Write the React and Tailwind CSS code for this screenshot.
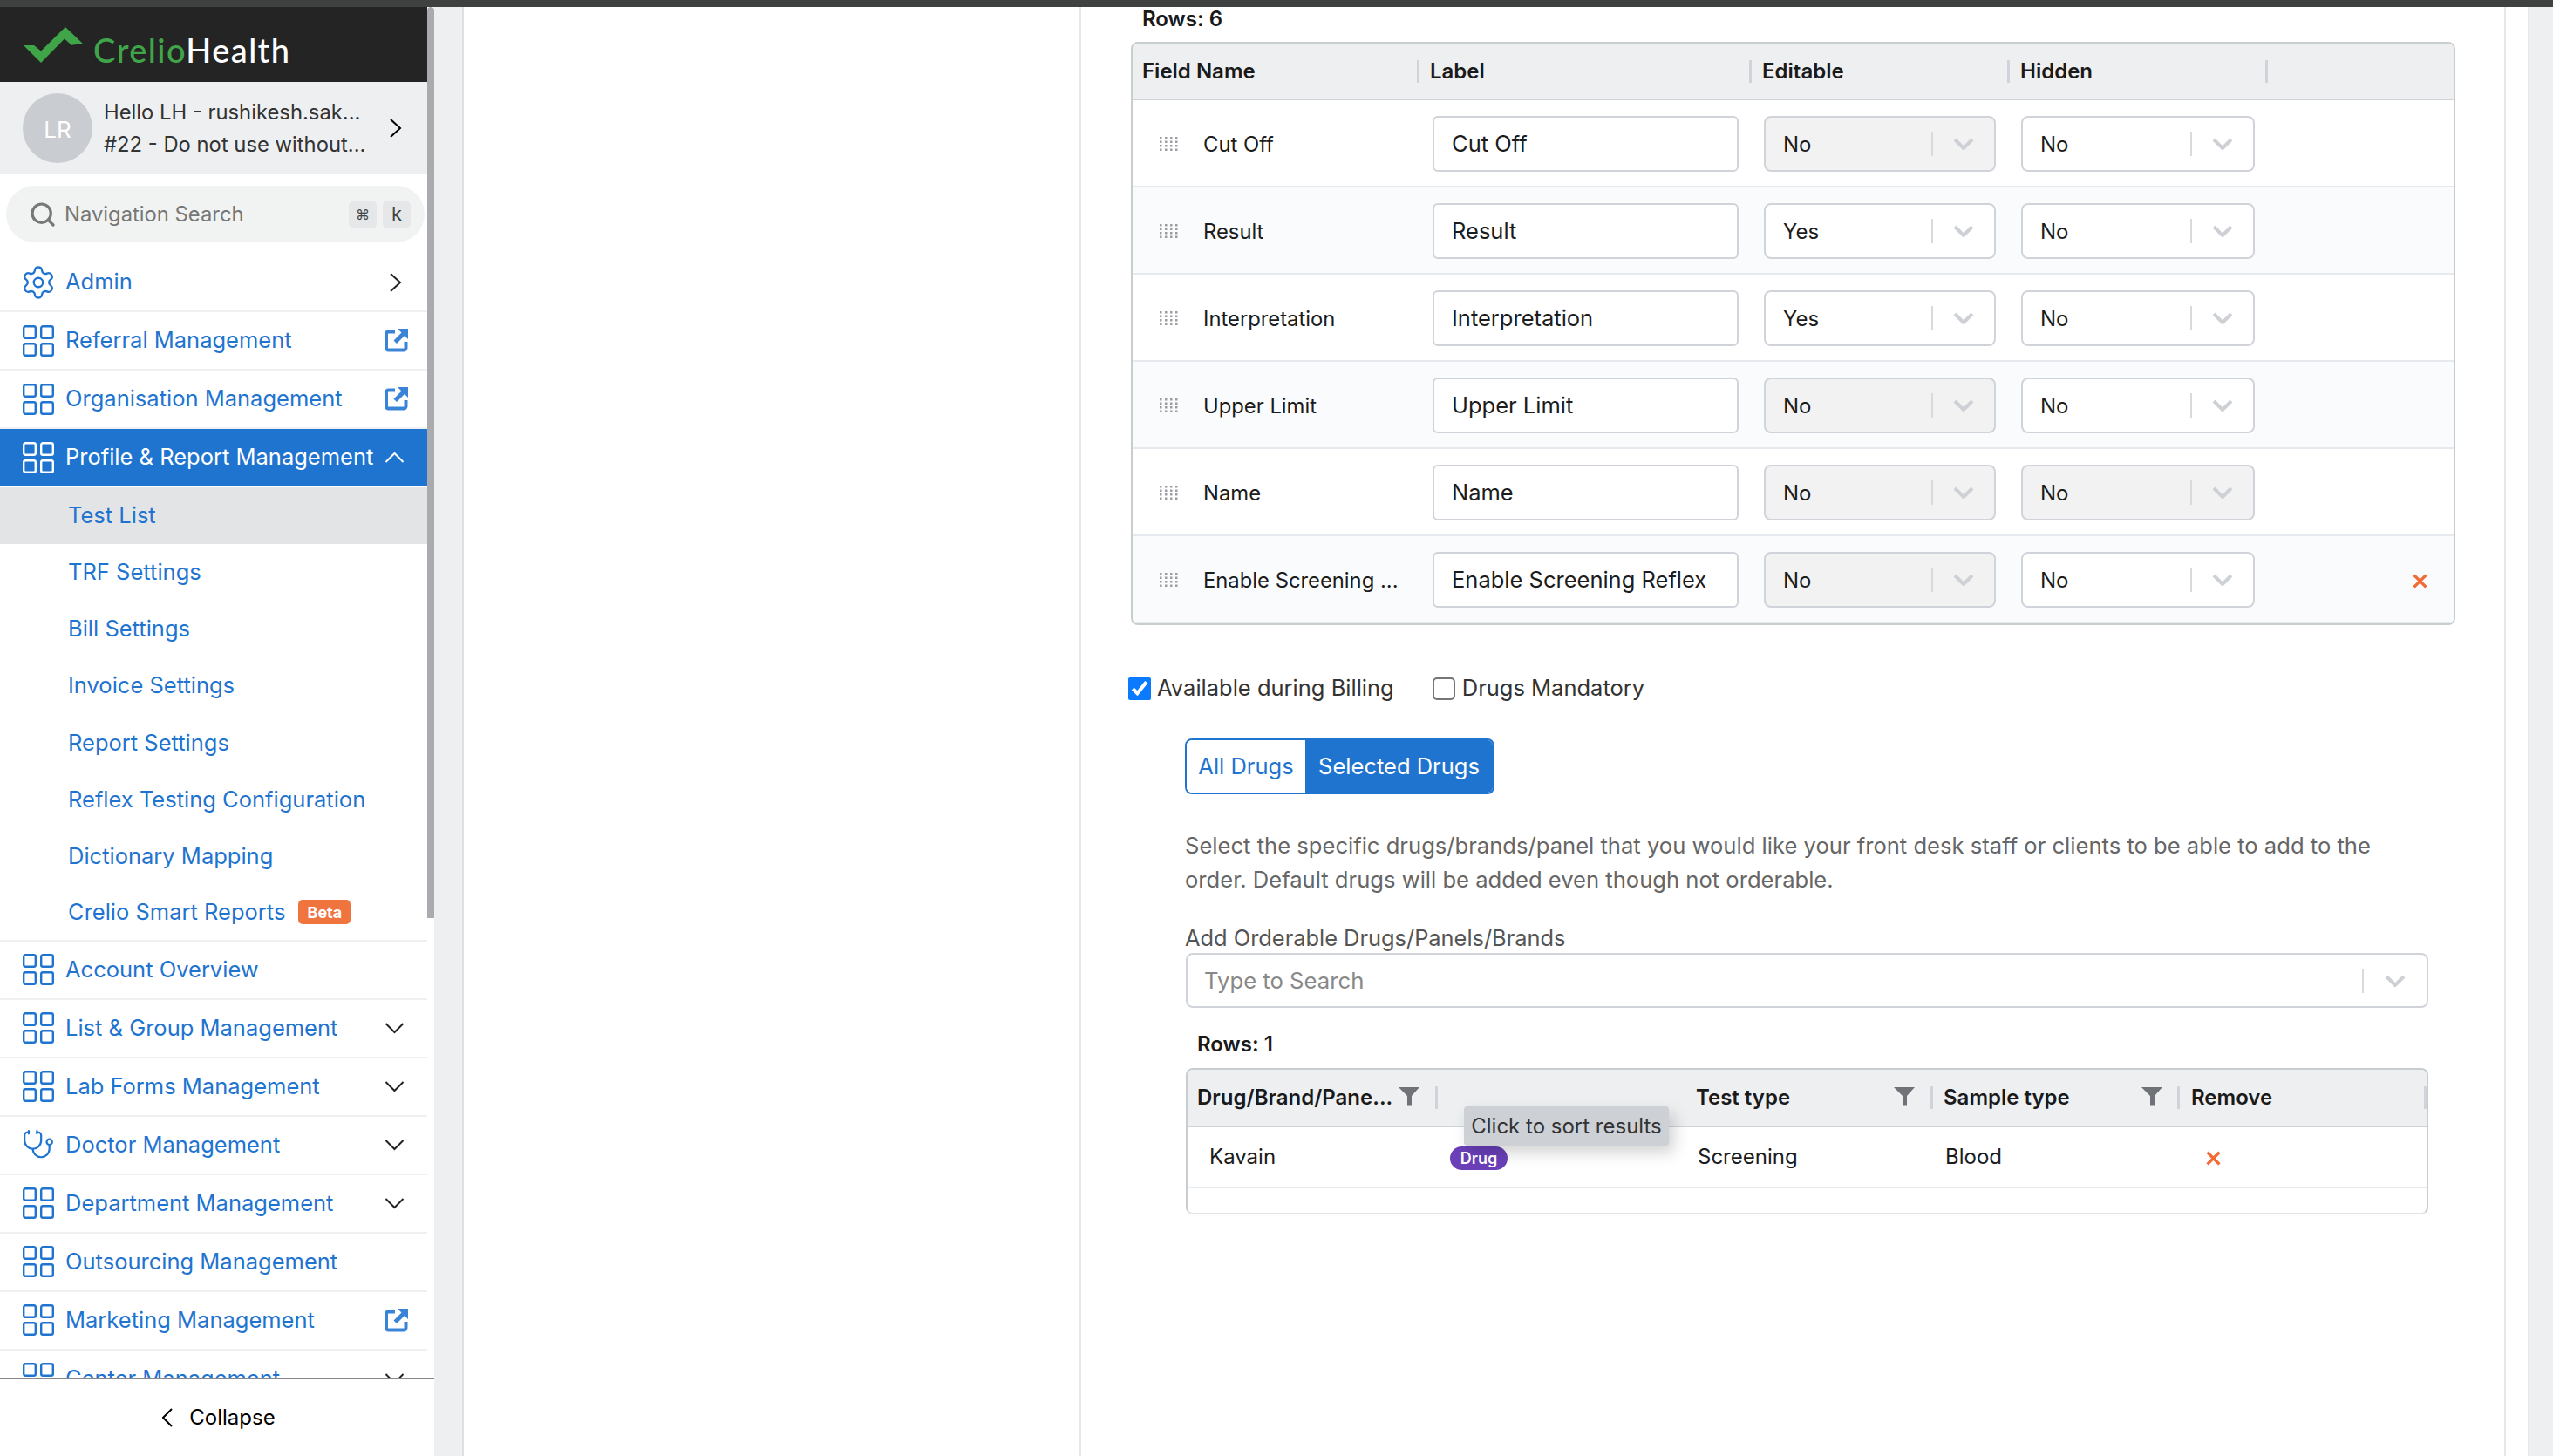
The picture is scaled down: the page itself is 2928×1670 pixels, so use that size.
import { Settings, Stethoscope, Search } from "lucide-react";

const fields = [
  { name: "Cut Off", label: "Cut Off", editable: "No", editLocked: true, hidden: "No" },
  { name: "Result", label: "Result", editable: "Yes", hidden: "No" },
  { name: "Interpretation", label: "Interpretation", editable: "Yes", hidden: "No" },
  { name: "Upper Limit", label: "Upper Limit", editable: "No", editLocked: true, hidden: "No" },
  { name: "Name", label: "Name", editable: "No", editLocked: true, hidden: "No", hiddenLocked: true },
  { name: "Enable Screening ...", label: "Enable Screening Reflex", editable: "No", editLocked: true, hidden: "No", removable: true },
];

const subMenu = ["TRF Settings", "Bill Settings", "Invoice Settings", "Report Settings", "Reflex Testing Configuration", "Dictionary Mapping"];

function GridIcon() {
  return (
    <svg width="36" height="36" viewBox="0 0 36 36" fill="none" stroke="currentColor" strokeWidth="2.400" className="shrink-0">
      <rect x="1.200" y="1.200" width="13.600" height="13.600" rx="2" />
      <rect x="21.200" y="1.200" width="13.600" height="13.600" rx="2" />
      <rect x="1.200" y="21.200" width="13.600" height="13.600" rx="2" />
      <rect x="21.200" y="21.200" width="13.600" height="13.600" rx="2" />
    </svg>
  );
}

function ExternalIcon() {
  return (
    <svg width="27" height="27" viewBox="0 0 27 27" fill="none" className="shrink-0 text-[#3a84d8]">
      <path d="M12 3.500H4.500a2.500 2.500 0 0 0-2.500 2.500V22a2.500 2.500 0 0 0 2.500 2.500H22a2.500 2.500 0 0 0 2.500-2.500v-7" stroke="currentColor" strokeWidth="4" />
      <path d="M15 0H27V12L23 8L14 17L10.500 13.500L19.500 4.500Z" fill="currentColor" />
    </svg>
  );
}

// thin chevrons, all share one 27px box so they line up with the external icon
function ChevronThin({ dir }) {
  const paths = {
    right: "M7 4L18 14L7 24",
    down: "M1.500 9L11.500 19L21.500 9",
    up: "M1.500 19L11.500 9L21.500 19",
  };
  return (
    <svg width="27" height="28" viewBox="0 0 27 28" fill="none" stroke="currentColor" strokeWidth="2" className="shrink-0">
      <path d={paths[dir]} />
    </svg>
  );
}

function Grip() {
  const dots = [];
  for (let r = 0; r < 4; r++) {
    for (let c = 0; c < 4; c++) {
      dots.push(<rect key={r + "-" + c} x={c * 6} y={r * 4.5} width="2.500" height="2.500" />);
    }
  }
  return (
    <svg width="21" height="16" viewBox="0 0 21 16" fill="#9a9ea3" className="shrink-0">
      {dots}
    </svg>
  );
}

function Funnel() {
  return (
    <svg width="24" height="21" viewBox="0 0 24 21" fill="#6f7277" className="shrink-0 -mt-[3px]">
      <path d="M0 0H24L15 10V20.500L10 20.500V10Z" />
    </svg>
  );
}

function Cross() {
  return (
    <svg width="17" height="17" viewBox="0 0 16 16" fill="none" stroke="#f26b35" strokeWidth="3.200" className="shrink-0 mt-[2px]">
      <path d="M1.500 1.500L14.500 14.500M14.500 1.500L1.500 14.500" />
    </svg>
  );
}

function Caret() {
  return (
    <svg width="24" height="14" viewBox="0 0 24 14" fill="none" stroke="#cdd0d4" strokeWidth="4" className="shrink-0">
      <path d="M2 2L12 12L22 2" />
    </svg>
  );
}

function Select({ value, locked, className }) {
  return (
    <div className={"h-[64px] flex items-center border-2 border-[#d0d4da] rounded-[8px] pl-[20px] text-[24px] text-[#1c1c1c] " + (locked ? "bg-[#f2f2f2] " : "bg-white ") + className}>
      <span className="flex-1 pt-[1px]">{value}</span>
      <span className="w-[2px] h-[28px] bg-[#d8dadd]" />
      <span className="w-[70px] flex justify-center">
        <Caret />
      </span>
    </div>
  );
}

function Sep() {
  return <span className="w-[3px] h-[26px] bg-[#d0d4da] shrink-0" />;
}

function NavRow({ label, icon, right }) {
  return (
    <div className="h-[67px] shrink-0 flex items-center pl-[26px] pr-[22px] gap-[13px] border-b-2 border-[#f0f0f1] text-[#1f74d0] text-[25.500px]">
      {icon || <GridIcon />}
      <span className="flex-1 whitespace-nowrap">{label}</span>
      {right}
    </div>
  );
}

function Sidebar() {
  return (
    <aside className="w-[498px] shrink-0 flex flex-col bg-white relative">
      <div className="absolute right-0 top-0 w-[8px] h-[1045px] bg-[#a9abae] rounded-t-[4px] z-10" />
      <div className="h-[86px] shrink-0 w-[490px] bg-[#242424] flex items-center pl-[27px] gap-[12px]">
        <svg width="68" height="41" viewBox="0 0 68 41" fill="#3fa548" className="shrink-0">
          <path d="M0 21H12L20 27.500L48 0L68 19L55 20.700L47 13.500L20 41Z" />
        </svg>
        <span className="font-['Lato',sans-serif] text-[38px] tracking-[1.400px] font-medium leading-none mt-[12px]">
          <span className="text-[#3fa548]">Crelio</span>
          <span className="text-white">Health</span>
        </span>
      </div>
      <div className="h-[106px] shrink-0 w-[490px] bg-[#eeeff1] flex items-center pl-[26px] pr-[22px]">
        <div className="w-[80px] h-[80px] rounded-full bg-[#c9ccd0] text-white text-[26px] flex items-center justify-center shrink-0 pt-[2px]">LR</div>
        <div className="ml-[13px] flex-1 text-[23.800px] leading-[37px] text-[#333] whitespace-nowrap">
          <div>Hello LH - rushikesh.sak...</div>
          <div>#22 - Do not use without...</div>
        </div>
        <ChevronThin dir="right" />
      </div>
      <div className="flex-1 min-h-0 w-[490px] overflow-hidden">
        <div className="pl-[7px] pr-[3px] pt-[13px] pb-[13px]">
          <div className="h-[65px] rounded-full bg-[#f1f3f3] flex items-center pl-[26px] pr-[16px] text-[23.800px] text-[#777]">
            <Search size={32} strokeWidth={2.400} className="shrink-0 text-[#777]" />
            <span className="ml-[9px] flex-1">Navigation Search</span>
            <span className="w-[32px] h-[32px] rounded-[6px] bg-[#e6e7e8] flex items-center justify-center text-[16px] text-[#444]">⌘</span>
            <span className="w-[32px] h-[32px] rounded-[6px] bg-[#e6e7e8] flex items-center justify-center text-[22px] text-[#444] ml-[7px]">k</span>
          </div>
        </div>
        <NavRow
          label="Admin"
          icon={
            <span className="w-[36px] h-[36px] flex items-center justify-center shrink-0">
              <Settings size={42} strokeWidth={1.350} className="shrink-0" />
            </span>
          }
          right={<span className="text-[#222]"><ChevronThin dir="right" /></span>}
        />
        <NavRow label="Referral Management" right={<ExternalIcon />} />
        <NavRow label="Organisation Management" right={<ExternalIcon />} />
        <div className="h-[67px] flex items-center pl-[26px] pr-[22px] gap-[13px] bg-[#1f74d0] border-b-2 border-white text-white text-[25.500px]">
          <GridIcon />
          <span className="flex-1 whitespace-nowrap">Profile &amp; Report Management</span>
          <ChevronThin dir="up" />
        </div>
        <div className="h-[64.600px] flex items-center pl-[78px] bg-[#e3e4e6] text-[#1f74d0] text-[25.500px]">Test List</div>
        {subMenu.map((s) => (
          <div key={s} className="h-[65.200px] flex items-center pl-[78px] text-[#1f74d0] text-[25.500px]">
            {s}
          </div>
        ))}
        <div className="h-[65.200px] flex items-center pl-[78px] text-[#1f74d0] text-[25.500px] border-b-2 border-[#f0f0f1]">
          Crelio Smart Reports
          <span className="ml-[15px] h-[28px] w-[60px] rounded-[5px] bg-[#f0743e] text-white text-[18px] font-bold flex items-center justify-center">Beta</span>
        </div>
        <NavRow label="Account Overview" />
        <NavRow label="List &amp; Group Management" right={<span className="text-[#222]"><ChevronThin dir="down" /></span>} />
        <NavRow label="Lab Forms Management" right={<span className="text-[#222]"><ChevronThin dir="down" /></span>} />
        <NavRow
          label="Doctor Management"
          icon={
            <span className="w-[36px] h-[36px] flex items-center justify-center shrink-0">
              <Stethoscope size={38} strokeWidth={1.400} className="shrink-0" />
            </span>
          }
          right={<span className="text-[#222]"><ChevronThin dir="down" /></span>}
        />
        <NavRow label="Department Management" right={<span className="text-[#222]"><ChevronThin dir="down" /></span>} />
        <NavRow label="Outsourcing Management" />
        <NavRow label="Marketing Management" right={<ExternalIcon />} />
        <NavRow label="Center Management" right={<span className="text-[#222]"><ChevronThin dir="down" /></span>} />
      </div>
      <div className="h-[90px] shrink-0 border-t-2 border-[#85878a] bg-white flex items-center justify-center pl-[4px] gap-[19px] text-[24px] text-black">
        <svg width="12" height="22" viewBox="0 0 12 22" fill="none" stroke="currentColor" strokeWidth="2" className="shrink-0">
          <path d="M11 1L1 11L11 21" />
        </svg>
        <span>Collapse</span>
      </div>
    </aside>
  );
}

function FieldTable() {
  return (
    <div className="w-[1519px] border-2 border-[#c8cdd0] rounded-[8px] overflow-hidden">
      <div className="h-[65px] bg-[#eeeff1] flex items-center border-b-2 border-[#d0d4da] text-[24px] font-semibold text-[#1a1a1a]">
        <div className="w-[326px] pl-[11px] pt-[1px]">Field Name</div>
        <Sep />
        <div className="w-[378px] pl-[12px] pt-[1px]">Label</div>
        <Sep />
        <div className="w-[293px] pl-[12px] pt-[1px]">Editable</div>
        <Sep />
        <div className="w-[293px] pl-[12px] pt-[1px]">Hidden</div>
        <Sep />
      </div>
      {fields.map((f, i) => (
        <div key={f.name} className={"h-[100px] pt-[2px] flex items-center border-b-2 border-[#e6e9ee] " + (i % 2 === 1 ? "bg-[#fafbfd]" : "bg-white")}>
          <div className="ml-[31px]">
            <Grip />
          </div>
          <div className="ml-[29px] w-[263px] text-[23.800px] text-[#1c1c1c] whitespace-nowrap pt-[1px]">{f.name}</div>
          <div className="w-[351px] h-[64px] bg-white border-2 border-[#d0d4da] rounded-[6px] flex items-center pl-[20px] text-[25.500px] text-[#1c1c1c] whitespace-nowrap">{f.label}</div>
          <Select value={f.editable} locked={f.editLocked} className="ml-[29px] w-[266px]" />
          <Select value={f.hidden} locked={f.hiddenLocked} className="ml-[29px] w-[268px]" />
          {f.removable && (
            <div className="ml-auto mr-[30px]">
              <Cross />
            </div>
          )}
        </div>
      ))}
    </div>
  );
}

function DrugTable() {
  return (
    <div className="relative ml-[1px] w-[1425px] h-[168px] border-2 border-[#c8cdd0] border-b-[#e2e5e8] rounded-[8px]">
      <div className="h-[66px] bg-[#eeeff1] flex items-center border-b-2 border-[#d0d4da] text-[24px] font-semibold text-[#1a1a1a] rounded-t-[6px]">
        <div className="w-[284px] pl-[11px] pr-[18px] flex items-center justify-between">
          <span className="whitespace-nowrap">Drug/Brand/Pane...</span>
          <Funnel />
        </div>
        <Sep />
        <div className="w-[565px] pl-[296px] pr-[18px] flex items-center justify-between">
          <span>Test type</span>
          <Funnel />
        </div>
        <Sep />
        <div className="w-[280px] pl-[12px] pr-[17px] flex items-center justify-between">
          <span>Sample type</span>
          <Funnel />
        </div>
        <Sep />
        <div className="flex-1 pl-[13px]">Remove</div>
        <Sep />
      </div>
      <div className="h-[70px] flex items-center border-b-2 border-[#e6e9ee] text-[24px] text-[#1c1c1c]">
        <div className="w-[301px] pl-[25px]">Kavain</div>
        <div className="w-[284px]">
          <span className="inline-flex items-center justify-center w-[66px] h-[27px] rounded-full bg-[#6a3fb8] text-white text-[18px] font-semibold mt-[4px]">Drug</span>
        </div>
        <div className="w-[284px]">Screening</div>
        <div className="w-[299px]">Blood</div>
        <Cross />
      </div>
      <div className="absolute left-[317px] top-[42px] w-[235px] h-[45px] rounded-[4px] bg-[#cdd0d5] text-[24px] text-[#333] flex items-center justify-center whitespace-nowrap shadow-[6px_8px_18px_rgba(0,0,0,0.18)]">
        Click to sort results
      </div>
    </div>
  );
}

export default function App() {
  return (
    <div className="w-[2928px] h-[1670px] overflow-hidden flex flex-col bg-white font-['Inter',sans-serif]">
      <div className="h-[8px] shrink-0 bg-[#3f4040]" />
      <div className="flex-1 min-h-0 flex">
        <Sidebar />
        <div className="w-[34px] shrink-0 bg-[#eeeff1] border-r-2 border-[#dfe0e2]" />
        <div className="w-[708px] shrink-0 border-r-2 border-[#e6e7e9]" />
        <div className="w-[1634px] shrink-0 border-r-2 border-[#e6e7e9]">
          <div className="ml-[57px]">
            <div className="h-[28px] mb-[12px] flex items-center pl-[13px] text-[24px] font-semibold text-[#1a1a1a]">Rows: 6</div>
            <FieldTable />
          </div>
          <div className="ml-[54px] mt-[60px] flex items-center h-[26px] text-[25.500px] text-[#333]">
            <input type="checkbox" defaultChecked className="w-[26px] h-[26px] accent-[#0a7aff]" />
            <span className="ml-[7px] -mt-[2px]">Available during Billing</span>
            <input type="checkbox" className="appearance-none w-[26px] h-[26px] ml-[44px] bg-white border-2 border-[#767676] rounded-[5px]" />
            <span className="ml-[8px] -mt-[2px]">Drugs Mandatory</span>
          </div>
          <div className="ml-[119px]">
            <div className="mt-[44px] inline-flex h-[64px] text-[25.500px] rounded-[8px] border-2 border-[#1f74d0] overflow-hidden align-top">
              <div className="w-[136px] pt-[1px] bg-white text-[#1f74d0] flex items-center justify-center">All Drugs</div>
              <div className="w-[215px] pt-[1px] bg-[#1f74d0] text-white flex items-center justify-center">Selected Drugs</div>
            </div>
            <p className="mt-[39px] text-[25.600px] leading-[39px] text-[#666] whitespace-nowrap">
              Select the specific drugs/brands/panel that you would like your front desk staff or clients to be able to add to the
              <br />
              order. Default drugs will be added even though not orderable.
            </p>
            <div className="mt-[33px] h-[30px] flex items-center text-[25.400px] text-[#555]">Add Orderable Drugs/Panels/Brands</div>
            <div className="mt-[2px] ml-[1px] w-[1425px] h-[63px] border-2 border-[#d0d4da] rounded-[8px] flex items-center pl-[19px] text-[25.700px] text-[#888]">
              <span className="flex-1 pt-[1px]">Type to Search</span>
              <span className="w-[2px] h-[28px] bg-[#d8dadd]" />
              <span className="w-[72px] flex justify-center">
                <Caret />
              </span>
            </div>
            <div className="mt-[28px] mb-[13px] h-[28px] flex items-center pl-[14px] text-[24px] font-semibold text-[#1a1a1a]">Rows: 1</div>
            <DrugTable />
          </div>
        </div>
        <div className="w-[27px] shrink-0 border-r-2 border-[#e6e7e9]" />
        <div className="flex-1 bg-[#eeeff1]" />
      </div>
    </div>
  );
}
